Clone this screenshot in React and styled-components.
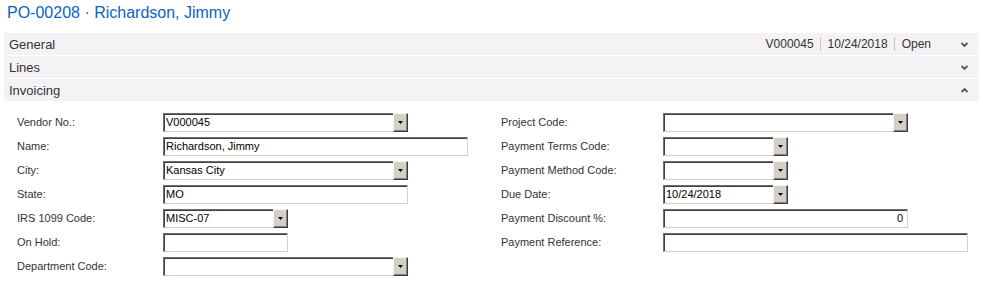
import React from "react";
import styled, { createGlobalStyle } from "styled-components";

const GlobalStyle = createGlobalStyle`
	body {
		margin: 0;
		background: #ffffff;
		font-family: "Liberation Sans", Arial, sans-serif;
		color: #333333;
	}
`;

const Page = styled.div`
	width: 983px;
	height: 290px;
	padding: 0 4px;
	box-sizing: border-box;
	overflow: hidden;
`;

const Title = styled.h1`
	margin: 0;
	height: 33px;
	padding: 3px 0 0 3px;
	box-sizing: border-box;
	font-size: 16px;
	font-weight: normal;
	line-height: 20px;
	color: #0b63c4;
`;

const Bar = styled.div`
	display: flex;
	align-items: center;
	width: 975px;
	height: 22px;
	margin-bottom: 1px;
	padding: 0 11px 0 5px;
	box-sizing: border-box;
	background: #f5f2f5;
	font-size: 13px;
	color: #333333;
`;

const BarTitle = styled.span`
	flex: 1;
`;

const Summary = styled.div`
	display: flex;
	align-items: center;
	font-size: 12px;
	margin-right: 30px;
`;

const SummaryItem = styled.span`
	padding: 0 ${(p) => (p.$last ? 0 : 6)}px 0 ${(p) => (p.$first ? 0 : 7)}px;
	border-left: ${(p) => (p.$first ? "none" : "1px solid #c8c8c8")};
	line-height: 14px;
`;

const Chevron = ({ up }) => (
	<svg width="7" height="5" viewBox="0 0 7 5">
		<path
			d={up ? "M0.5 4 L3.5 1 L6.5 4" : "M0.5 1 L3.5 4 L6.5 1"}
			fill="none"
			stroke="#555555"
			strokeWidth="1.8"
		/>
	</svg>
);

const Form = styled.div`
	display: flex;
	padding: 8px 0 0 13px;
`;

const Column = styled.div`
	width: ${(p) => p.$width}px;
	display: flex;
	flex-direction: column;
`;

const Row = styled.div`
	display: flex;
	align-items: center;
	height: 24px;
	font-size: 11px;
`;

const Label = styled.label`
	width: ${(p) => p.$width}px;
	color: #333333;
`;

const widths = { s: 125, m: 245, l: 305 };

const Field = styled.div`
	display: flex;
	width: ${(p) => widths[p.$size]}px;
	height: 19px;
	box-sizing: border-box;
	border-style: solid;
	border-width: 1px;
	border-color: #6f6f6f #d4d0c8 #d4d0c8 #6f6f6f;
	box-shadow: inset 1px 1px 0 #404040;
	background: #ffffff;
`;

const Value = styled.span`
	flex: 1;
	padding: 0 ${(p) => (p.$right ? 4 : 2)}px 0 2px;
	text-align: ${(p) => (p.$right ? "right" : "left")};
	line-height: 17px;
	font-size: 11px;
	color: #000000;
	white-space: nowrap;
	overflow: hidden;
`;

const DropButton = styled.span`
	display: flex;
	align-items: center;
	justify-content: center;
	width: 15px;
	margin-top: -1px;
	margin-right: -1px;
	margin-bottom: -1px;
	box-sizing: border-box;
	background: #d4d0c8;
	border-style: solid;
	border-width: 1px;
	border-color: #f4f4f4 #404040 #404040 #f4f4f4;
	box-shadow: inset -1px -1px 0 #808080;
`;

const Arrow = () => (
	<svg width="5" height="3" viewBox="0 0 5 3">
		<path d="M0 0 H5 L2.5 3 Z" fill="#000000" />
	</svg>
);

function Input({ size, value, dropdown, right }) {
	return (
		<Field $size={size}>
			<Value $right={right}>{value}</Value>
			{dropdown && (
				<DropButton>
					<Arrow />
				</DropButton>
			)}
		</Field>
	);
}

const left = [
	{ label: "Vendor No.:", size: "m", value: "V000045", dropdown: true },
	{ label: "Name:", size: "l", value: "Richardson, Jimmy" },
	{ label: "City:", size: "m", value: "Kansas City", dropdown: true },
	{ label: "State:", size: "m", value: "MO" },
	{ label: "IRS 1099 Code:", size: "s", value: "MISC-07", dropdown: true },
	{ label: "On Hold:", size: "s", value: "" },
	{ label: "Department Code:", size: "m", value: "", dropdown: true },
];

const right = [
	{ label: "Project Code:", size: "m", value: "", dropdown: true },
	{ label: "Payment Terms Code:", size: "s", value: "", dropdown: true },
	{ label: "Payment Method Code:", size: "s", value: "", dropdown: true },
	{ label: "Due Date:", size: "s", value: "10/24/2018", dropdown: true },
	{ label: "Payment Discount %:", size: "m", value: "0", right: true },
	{ label: "Payment Reference:", size: "l", value: "" },
];

export default function App() {
	return (
		<>
			<GlobalStyle />
			<Page>
				<Title>PO-00208 · Richardson, Jimmy</Title>
				<Bar>
					<BarTitle>General</BarTitle>
					<Summary>
						<SummaryItem $first>V000045</SummaryItem>
						<SummaryItem>10/24/2018</SummaryItem>
						<SummaryItem $last>Open</SummaryItem>
					</Summary>
					<Chevron />
				</Bar>
				<Bar>
					<BarTitle>Lines</BarTitle>
					<Chevron />
				</Bar>
				<Bar>
					<BarTitle>Invoicing</BarTitle>
					<Chevron up />
				</Bar>
				<Form>
					<Column $width={484}>
						{left.map((f) => (
							<Row key={f.label}>
								<Label $width={146}>{f.label}</Label>
								<Input {...f} />
							</Row>
						))}
					</Column>
					<Column $width={470}>
						{right.map((f) => (
							<Row key={f.label}>
								<Label $width={162}>{f.label}</Label>
								<Input {...f} />
							</Row>
						))}
					</Column>
				</Form>
			</Page>
		</>
	);
}
